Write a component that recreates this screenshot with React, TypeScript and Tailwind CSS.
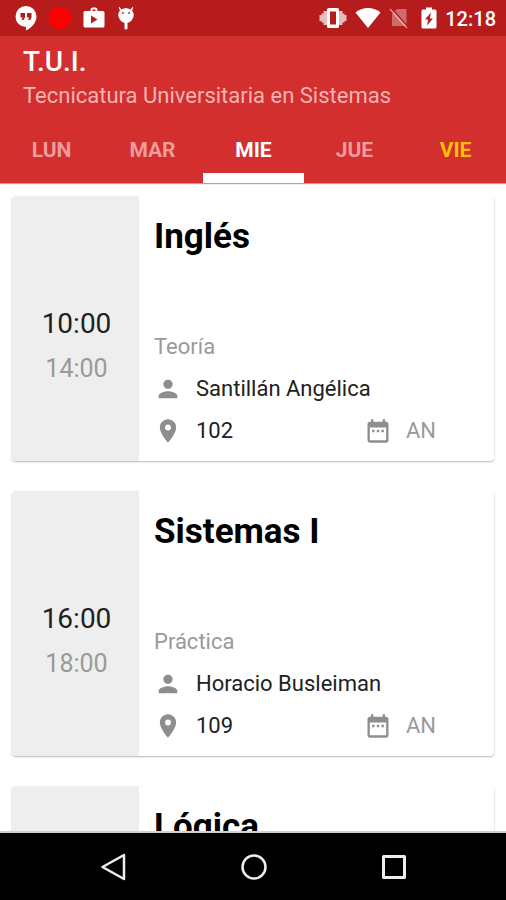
/**
 * Weekly class schedule: status bar, header with day tabs, list of class cards, navigation bar.
 */
import { useState } from 'react'
import { MdDateRange, MdPerson, MdPlace } from 'react-icons/md'

type ClassItem = {
  id: number
  subject: string
  start: string
  end: string
  kind: string
  teacher: string
  room: string
  building: string
}

const DAYS = ['LUN', 'MAR', 'MIE', 'JUE', 'VIE']
const TODAY = 'VIE'

const CLASSES: ClassItem[] = [
  { id: 1, subject: 'Inglés', start: '10:00', end: '14:00', kind: 'Teoría', teacher: 'Santillán Angélica', room: '102', building: 'AN' },
  { id: 2, subject: 'Sistemas I', start: '16:00', end: '18:00', kind: 'Práctica', teacher: 'Horacio Busleiman', room: '109', building: 'AN' },
  { id: 3, subject: 'Lógica', start: '', end: '', kind: '', teacher: '', room: '', building: '' },
]

function StatusBar() {
  return (
    <div className="flex h-9 shrink-0 items-center justify-between bg-[#b71c1c] pr-[10px] pl-[15px] text-white">
      <div className="flex items-center gap-3">
        {/* hangouts */}
        <svg viewBox="0 0 22 26" className="h-[26px] w-[22px]" fill="currentColor">
          <path d="M11 1a10.500 10.500 0 0 0 0 21v3.500c5-2.400 10.500-7.500 10.500-14A10.500 10.500 0 0 0 11 1z" />
          <path fill="#b71c1c" d="M5.500 8h4.500v4.500L8.500 15H6.500l1.200-2.500H5.500zM12 8h4.500v4.500L15 15h-2l1.200-2.500H12z" />
        </svg>
        <span className="size-[22px] rounded-full bg-[#ff0000]" />
        {/* play store */}
        <svg viewBox="0 0 22 22" className="size-[22px]" fill="currentColor">
          <path fillRule="evenodd" d="M7.500 4V3A2.500 2.500 0 0 1 10 .5h2A2.500 2.500 0 0 1 14.500 3v1H20a1.500 1.500 0 0 1 1.500 1.500V19A1.500 1.500 0 0 1 20 20.500H2A1.500 1.500 0 0 1 .5 19V5.500A1.500 1.500 0 0 1 2 4zM9.500 4h3V2.500h-3zM8 8.500v8l6.500-4z" />
        </svg>
        {/* debug bug */}
        <svg viewBox="0 0 18 24" className="h-6 w-[18px]" fill="currentColor">
          <path fillRule="evenodd" d="M2.500 1l2 2.500a8 8 0 0 1 9 0l2-2.500.8.600-1.300 3.200c1 1 1.700 2.400 1.700 4.200 0 2.400-1.200 4-2.200 5.500-1 1.300-2.300 2-4 2.200V22a1.500 1.500 0 0 1-3 0v-5.300c-1.700-.2-3-.9-4-2.200C2.500 13 1.300 11.400 1.300 9c0-1.800.7-3.200 1.700-4.200L1.700 1.600zM5 6.200v1.600h1.800V6.200zm6.200 0v1.600H13V6.200z" />
        </svg>
      </div>
      <div className="flex items-center gap-2">
        {/* vibrate */}
        <svg viewBox="0 0 28 22" className="h-[22px] w-7" fill="currentColor">
          <path opacity=".7" d="M.5 8h2V6.500h2V4H8v14H4.500v-2.500h-2V14h-2zM27.500 8h-2V6.500h-2V4H20v14h3.500v-2.500h2V14h2z" />
          <path fillRule="evenodd" d="M9.500 1h9A1.500 1.500 0 0 1 20 2.500v17a1.500 1.500 0 0 1-1.500 1.500h-9A1.500 1.500 0 0 1 8 19.500v-17A1.500 1.500 0 0 1 9.500 1zM11 4.500v13h6v-13z" />
        </svg>
        <svg viewBox="0 0 26 20" className="h-5 w-[26px]" fill="currentColor">
          <path d="M13 20L.5 4.500C4 1.500 8.500 0 13 0s9 1.500 12.500 4.500z" />
        </svg>
        {/* no sim */}
        <svg viewBox="0 0 20 22" className="h-[22px] w-5">
          <path fill="#fff" opacity=".35" d="M8 2h8.500a1 1 0 0 1 1 1v16H3V7z" />
          <path stroke="#b71c1c" strokeWidth="1.500" d="M3 2l16 18" />
          <path stroke="#fff" opacity=".5" strokeWidth="1.500" d="M1 2l17 19" />
        </svg>
        <svg viewBox="0 0 16 22" className="ml-1 h-[22px] w-4" fill="currentColor">
          <path fillRule="evenodd" d="M5 .5h6v2h3A1.500 1.500 0 0 1 15.500 4v16a1.500 1.500 0 0 1-1.500 1.500H2A1.500 1.500 0 0 1 .5 20V4A1.500 1.500 0 0 1 2 2.500h3zM10 5.500L4 12.500h3.200L6 18.500l6-7H8.800z" />
        </svg>
        <span className="pt-[2px] text-[20px] leading-6 font-medium">12:18</span>
      </div>
    </div>
  )
}

function ClassCard({ item }: { item: ClassItem }) {
  return (
    <article className="flex min-h-[265px] shrink-0 overflow-hidden rounded bg-white shadow-[0_1px_2px_rgba(0,0,0,0.28)]">
      <div className="flex w-[127px] shrink-0 flex-col items-center justify-center bg-[#eeeeee] pt-[34px] pl-[2px]">
        <time className="text-[28px] leading-[45px] text-[#212121]">{item.start}</time>
        <time className="text-[25px] leading-[45px] text-[#9a9a9a]">{item.end}</time>
      </div>
      <div className="flex min-w-0 flex-1 flex-col pt-5 pb-[9px] pl-[15px] text-[22px] leading-[42px]">
        <h2 className="text-[35px] font-bold text-black">{item.subject}</h2>
        {item.kind && (
          <div className="mt-auto">
            <p className="text-[#9a9a9a]">{item.kind}</p>
            <p className="flex items-center gap-[14px] text-[#212121]">
              <MdPerson className="size-7 text-[#8e8e8e]" />
              {item.teacher}
            </p>
            <div className="flex">
              <p className="flex flex-1 items-center gap-[14px] text-[#212121]">
                <MdPlace className="size-7 text-[#8e8e8e]" />
                {item.room}
              </p>
              <p className="flex w-[130px] items-center gap-[14px] text-[#9a9a9a]">
                <MdDateRange className="size-7 text-[#8e8e8e]" />
                {item.building}
              </p>
            </div>
          </div>
        )}
      </div>
    </article>
  )
}

function NavigationBar() {
  const btn = 'flex flex-1 items-center justify-center'
  return (
    <nav className="flex h-[67px] shrink-0 bg-black pr-[42px] pl-11 text-[#eeeeee]">
      <button type="button" aria-label="Atrás" className={btn}>
        <svg viewBox="0 0 28 28" className="size-7" fill="none" stroke="currentColor" strokeWidth="2.500" strokeLinejoin="round">
          <path d="M2.500 14L24 2v24z" />
        </svg>
      </button>
      <button type="button" aria-label="Inicio" className={btn}>
        <svg viewBox="0 0 28 28" className="size-7" fill="none" stroke="currentColor" strokeWidth="2.500">
          <circle cx="14" cy="14" r="11.500" />
        </svg>
      </button>
      <button type="button" aria-label="Recientes" className={btn}>
        <svg viewBox="0 0 28 28" className="size-7" fill="none" stroke="currentColor" strokeWidth="3" strokeLinejoin="round">
          <rect x="3.500" y="3.500" width="21" height="21" />
        </svg>
      </button>
    </nav>
  )
}

export default function App() {
  const [day, setDay] = useState('MIE')

  const tabCls = (d: string) => {
    if (d === day) return 'border-white text-white'
    if (d === TODAY) return 'border-transparent text-[#ffc107]'
    return 'border-transparent text-[#ee9c9c]'
  }

  return (
    <div className="flex h-screen flex-col overflow-hidden bg-white font-[Roboto,sans-serif]">
      <StatusBar />
      <header className="shrink-0 bg-[#d32f2f] shadow-[0_1px_1px_rgba(0,0,0,0.35)]">
        <div className="px-[23px] pt-[9px]">
          <h1 className="text-[28px] leading-[34px] font-medium text-white">T.U.I.</h1>
          <p className="text-[22px] leading-[34px] text-[#f4b4b4]">Tecnicatura Universitaria en Sistemas</p>
        </div>
        <div role="tablist" className="mt-1 flex pl-px">
          {DAYS.map((d) => (
            <button
              key={d}
              type="button"
              role="tab"
              aria-selected={d === day}
              onClick={() => setDay(d)}
              className={`h-[66px] flex-1 border-b-[10px] pt-[9px] text-[21px] leading-7 font-bold ${tabCls(d)}`}
            >
              {d}
            </button>
          ))}
        </div>
      </header>
      <main className="flex min-h-0 flex-1 flex-col gap-[30px] overflow-hidden border-b-2 border-[#d0d0d0] px-3 pt-[13px]">
        {CLASSES.map((c) => (
          <ClassCard key={c.id} item={c} />
        ))}
      </main>
      <NavigationBar />
    </div>
  )
}
